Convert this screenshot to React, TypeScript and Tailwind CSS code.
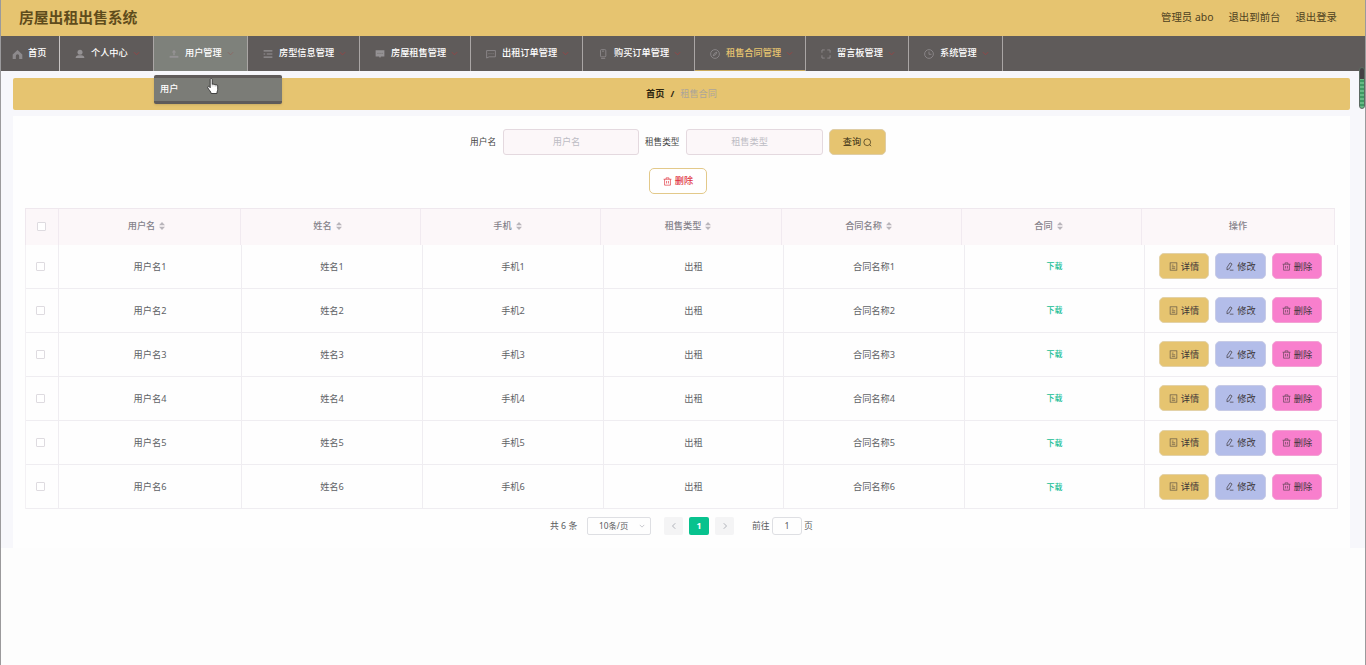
import type { ReactNode } from "react";

type IconProps = { name: string; className?: string };

const icons: Record<string, ReactNode> = {
  home: (
    <path
      d="M8 1.500 1 8v6.500h4.600V10a2.400 2.400 0 0 1 4.800 0v4.500H15V8z"
      fill="currentColor"
      stroke="none"
    />
  ),
  user: (
    <g fill="currentColor" stroke="none">
      <circle cx="8" cy="5" r="4" />
      <path d="M1 14.500c0-3.200 2.200-4.500 5-4.500h4c2.800 0 5 1.300 5 4.500z" />
    </g>
  ),
  upload: (
    <g fill="currentColor" stroke="none">
      <path d="M8 1 4.500 5.500h2.300V10h2.400V5.500h2.300z" />
      <path d="M1 11h14v3H1z" />
    </g>
  ),
  list: <path d="M1 3h14M6 8h9M1 13h14M1 8h2.500" strokeWidth="1.700" />,
  chat: (
    <>
      <path
        d="M1 2h14v10H9.500L8 14.500 6.500 12H1z"
        fill="currentColor"
        stroke="none"
      />
      <path d="M4 7h1.500M7.300 7h1.500M10.600 7h1.500" stroke="#5f5b5a" />
    </>
  ),
  message: (
    <>
      <path d="M1 2.500h14v10H5L1 14.500z" />
      <path d="M4 7.500h1.500M7.300 7.500h1.500M10.600 7.500h1.500" />
    </>
  ),
  phone: (
    <>
      <rect x="4" y="1" width="8.500" height="11.500" rx="1.500" />
      <path d="M6.500 3.500h3M5 15h6.500" />
    </>
  ),
  compass: (
    <>
      <circle cx="8" cy="8" r="7" />
      <path d="m11 5-2 4-4 2 2-4z" />
    </>
  ),
  full: <path d="M1.500 6V1.500H6M10 1.500h4.500V6M14.500 10v4.500H10M6 14.500H1.500V10" />,
  clock: (
    <>
      <circle cx="8" cy="8" r="7" />
      <path d="M8 4v4.500h4" />
    </>
  ),
  search: (
    <>
      <circle cx="7.500" cy="7.500" r="6" />
      <path d="m12 12 2.500 2.500" />
    </>
  ),
  trash: (
    <path d="M1 4h14M5.500 4V1.500h5V4M2.800 4v10.500h10.400V4M6.300 7v4.500M9.700 7v4.500" />
  ),
  doc: (
    <>
      <rect x="2" y="1.500" width="12" height="13" />
      <path d="M5 5.500h3M5 8.500h6M5 11.300h6" />
    </>
  ),
  edit: <path d="m9 1.500 3.500 2L7.500 12l-4 2 .3-4.500zM8.500 14.500H15" />,
  down: <path d="m2 5 6 6 6-6" />,
  left: <path d="m10.500 2.500-5.500 5.500 5.500 5.500" />,
  right: <path d="m5.500 2.500 5.500 5.500-5.500 5.500" />,
};

function Icon({ name, className = "" }: IconProps) {
  return (
    <svg
      viewBox="0 0 16 16"
      fill="none"
      stroke="currentColor"
      strokeWidth="1.2"
      className={`shrink-0 ${className}`}
    >
      {icons[name]}
    </svg>
  );
}

const menu = [
  { label: "个人中心", icon: "user", width: "w-[94px]" },
  { label: "用户管理", icon: "upload", width: "w-[94px]", open: true },
  { label: "房型信息管理", icon: "list", width: "w-[112px]" },
  { label: "房屋租售管理", icon: "chat", width: "w-[111px]" },
  { label: "出租订单管理", icon: "message", width: "w-[112px]" },
  { label: "购买订单管理", icon: "phone", width: "w-[112px]" },
  { label: "租售合同管理", icon: "compass", width: "w-[111px]", active: true },
  { label: "留言板管理", icon: "full", width: "w-[103px]" },
  { label: "系统管理", icon: "clock", width: "w-[94px]" },
];

const columns = ["用户名", "姓名", "手机", "租售类型", "合同名称", "合同"];
const rows = [1, 2, 3, 4, 5, 6];

function Header() {
  return (
    <header className="flex h-9 items-center justify-between bg-[#e6c470] pl-[18px] pr-[28px] text-[#4d4120]">
      <h1 className="pb-[2px] text-[14.8px] font-bold leading-none text-[#5f4c1c]">房屋出租出售系统</h1>
      <div className="flex gap-[15px] pb-[2px] text-[10.4px] leading-none">
        <span>管理员 abo</span>
        <span>退出到前台</span>
        <span>退出登录</span>
      </div>
    </header>
  );
}

function Nav() {
  return (
    <nav className="flex h-[35px] bg-[#5f5b5a] font-medium text-white">
      <div className="flex w-[59px] items-center border-r border-[#c9c5c4] pb-px pl-[11px]">
        <Icon name="home" className="mt-0.5 size-[11px] text-[#8d8a8c]" />
        <span className="ml-[5px]">首页</span>
      </div>
      {menu.map((item) => (
        <div
          key={item.label}
          className={`relative flex shrink-0 items-center border-r border-[#aaa6a5] pb-px pl-[15px] ${item.width} ${
            item.open ? "bg-[#7e817b]" : ""
          } ${item.active ? "text-[#e6c470] shadow-[inset_0_-1px_0_#c9aa5c]" : ""}`}
        >
          <Icon name={item.icon} className="mt-0.5 size-[10px] text-[#959294]" />
          <span className="ml-[6px] whitespace-nowrap">{item.label}</span>
          <Icon
            name="down"
            className={`ml-[5px] size-[7px] stroke-[2.2] ${item.open ? "text-[#8a6a66]" : "text-[#934747]"}`}
          />
          {item.open && (
            <div className="absolute left-0 top-[39px] z-10 h-[29px] w-[128px] rounded-[2px] border-b-[3px] border-t-[3px] border-[#5f5b5a] bg-[#7b7c77] pl-[6px] leading-[22px] shadow">
              用户
              <Cursor />
            </div>
          )}
        </div>
      ))}
    </nav>
  );
}

function Cursor() {
  return (
    <svg viewBox="0 0 12 17" className="absolute left-[53px] top-0 h-[17px] w-3">
      <path
        d="M3.200 1.500c0-1.300 2-1.300 2 0v5c.3-.7 1.700-.6 1.800.3.4-.7 1.700-.5 1.800.4.6-.6 1.900-.3 1.900.7v3.500c0 1.300-.8 2-.8 4.100H4.200C4 13.700 2 12 .8 9.800c-.6-1.100.7-2 1.500-1.100l.9 1z"
        fill="#fff"
        stroke="#222"
        strokeWidth=".8"
      />
      <path d="M5.200 6.500v2M7.100 7v1.500M8.900 7.500v1.500" stroke="#888" strokeWidth=".4" />
    </svg>
  );
}

function Filters() {
  return (
    <div className="flex h-[26px] items-center pl-[457px] text-[#444]">
      <span className="w-[33px] whitespace-nowrap text-[8.7px]">用户名</span>
      <div className="flex h-[26px] w-[136px] items-center justify-center rounded-[3px] border border-[#e4d9df] bg-[#fcf7f9] pr-[9px] text-[#bcbcc4]">
        用户名
      </div>
      <span className="ml-[6px] w-[41px] whitespace-nowrap text-[8.6px]">租售类型</span>
      <div className="flex h-[26px] w-[137px] items-center justify-center rounded-[3px] border border-[#e4d9df] bg-[#fcf7f9] pr-[10px] text-[#bcbcc4]">
        租售类型
      </div>
      <button className="ml-[6px] flex h-[26px] w-[57px] items-center justify-center rounded-[5px] border border-[#dfcda5] bg-[#e6c470] text-[#33290f]">
        查询
        <Icon name="search" className="ml-[2px] size-[9px]" />
      </button>
    </div>
  );
}

function SortCaret() {
  return (
    <svg viewBox="0 0 6 8" className="ml-[4px] h-2 w-[6px] fill-[#b9b5bb]">
      <path d="M3 0 6 3.300H0zM0 4.700h6L3 8z" />
    </svg>
  );
}

function Checkbox() {
  return <span className="block size-[9px] rounded-[1px] border border-[#dedbe0] bg-white" />;
}

function Table() {
  return (
    <div className="ml-[12px] mt-[14px] w-[1313px] text-[#606266]">
      <div className="grid h-[36.600px] w-[1310px] grid-cols-[33px_182px_180px_180px_181px_180px_180px_193px] border-l border-t border-[#efe8ee] bg-[#fcf7f9] text-[#85828a]">
        <div className="flex items-center justify-center border-r border-[#f1eaf0] pr-[2px]">
          <Checkbox />
        </div>
        {columns.map((label) => (
          <div
            key={label}
            className="flex items-center justify-center border-r border-[#f1eaf0] pb-[2px] pr-[6px] font-medium"
          >
            {label}
            <SortCaret />
          </div>
        ))}
        <div className="flex items-center justify-center border-r border-[#f1eaf0] pb-[2px] font-medium">操作</div>
      </div>
      <div className="border-l border-[#f3f1f4]">
        {rows.map((n) => (
          <div
            key={n}
            className="grid h-[44.100px] grid-cols-[33px_183px_181px_181px_180px_181px_180px_193px] border-b border-[#efedf1] *:flex *:items-center *:justify-center *:border-r *:border-[#efedf1]"
          >
            <div className="pr-[3px]">
              <Checkbox />
            </div>
            <div>用户名{n}</div>
            <div>姓名{n}</div>
            <div>手机{n}</div>
            <div>出租</div>
            <div>合同名称{n}</div>
            <div className="text-[8px] font-medium text-[#16bd94]">下载</div>
            <div className="gap-[6px] pr-px text-[#3c3638]">
              <button className="flex h-[26px] w-[50px] items-center justify-center gap-[3px] rounded-[5px] border border-[#e3d2a8] bg-[#e6c470]">
                <Icon name="doc" className="size-[9px] opacity-80" />
                详情
              </button>
              <button className="flex h-[26px] w-[51px] items-center justify-center gap-[3px] rounded-[5px] border border-[#c7cbe6] bg-[#b3bde9]">
                <Icon name="edit" className="size-[9px]" />
                修改
              </button>
              <button className="flex h-[26px] w-[50px] items-center justify-center gap-[3px] rounded-[5px] border border-[#f3a2d4] bg-[#f87fcd]">
                <Icon name="trash" className="size-[9px] opacity-80" />
                删除
              </button>
            </div>
          </div>
        ))}
      </div>
    </div>
  );
}

function Pagination() {
  return (
    <div className="mt-[7.800px] flex h-[18px] items-center pl-[537px] text-[8.8px] text-[#5a5c60]">
      <span className="w-[37px] whitespace-nowrap">共 6 条</span>
      <div className="flex h-[18px] w-16 items-center rounded-[2px] border border-[#dedfe3] pl-[11px] text-[8.3px]">
        10条/页
        <Icon name="down" className="ml-[11px] size-[6px] stroke-2 text-[#b5b7bd]" />
      </div>
      <span className="ml-[13px] flex h-[18px] w-[19px] items-center justify-center rounded-[2px] bg-[#f4f4f5] text-[#b0b3ba]">
        <Icon name="left" className="size-2 stroke-2" />
      </span>
      <span className="ml-[6px] flex h-[18px] w-[20px] items-center justify-center rounded-[2px] bg-[#08c28e] font-bold text-white">
        1
      </span>
      <span className="ml-[6px] flex h-[18px] w-[19px] items-center justify-center rounded-[2px] bg-[#f4f4f5] text-[#b0b3ba]">
        <Icon name="right" className="size-2 stroke-2" />
      </span>
      <span className="ml-[18px] w-5 whitespace-nowrap">前往</span>
      <span className="flex h-[18px] w-[30px] items-center justify-center rounded-[3px] border border-[#dedfe3]">1</span>
      <span className="ml-[2px]">页</span>
    </div>
  );
}

export default function App() {
  return (
    <div className="relative h-[665px] w-[1366px] overflow-hidden border-x border-[#9b9a9c] bg-[#fdfdfd] font-['Noto_Sans','Noto_Sans_CJK_SC',sans-serif] text-[9.2px] leading-none">
      <Header />
      <Nav />
      <main className="h-[477px] bg-[#f7f7fb] pl-3 pr-[15px] pt-[7px]">
        <div className="flex h-8 items-center rounded-[2px] bg-[#e6c470] pl-[633px] font-bold text-[#2f2710]">
          首页
          <span className="mx-[6px]">/</span>
          <span className="font-normal text-[#aba59a]">租售合同</span>
        </div>
        <section className="mt-[6px] h-[432px] bg-[#fefefe] pt-[13px]">
          <Filters />
          <button className="ml-[636px] mt-[13px] flex h-[26px] w-[58px] items-center justify-center gap-[3px] rounded-[5px] border border-[#e3c98a] bg-white font-medium text-[#e0343f]">
            <Icon name="trash" className="size-[9px]" />
            删除
          </button>
          <Table />
          <Pagination />
        </section>
      </main>
      <div className="absolute right-0 top-[67px] h-[42px] w-[6px] rounded-full border border-[#5d6a62] bg-[repeating-linear-gradient(#3f9a63_0_2px,#67b985_2px_4px)]">
        <div className="h-[11px] rounded-t-full bg-[#454045]" />
      </div>
    </div>
  );
}
